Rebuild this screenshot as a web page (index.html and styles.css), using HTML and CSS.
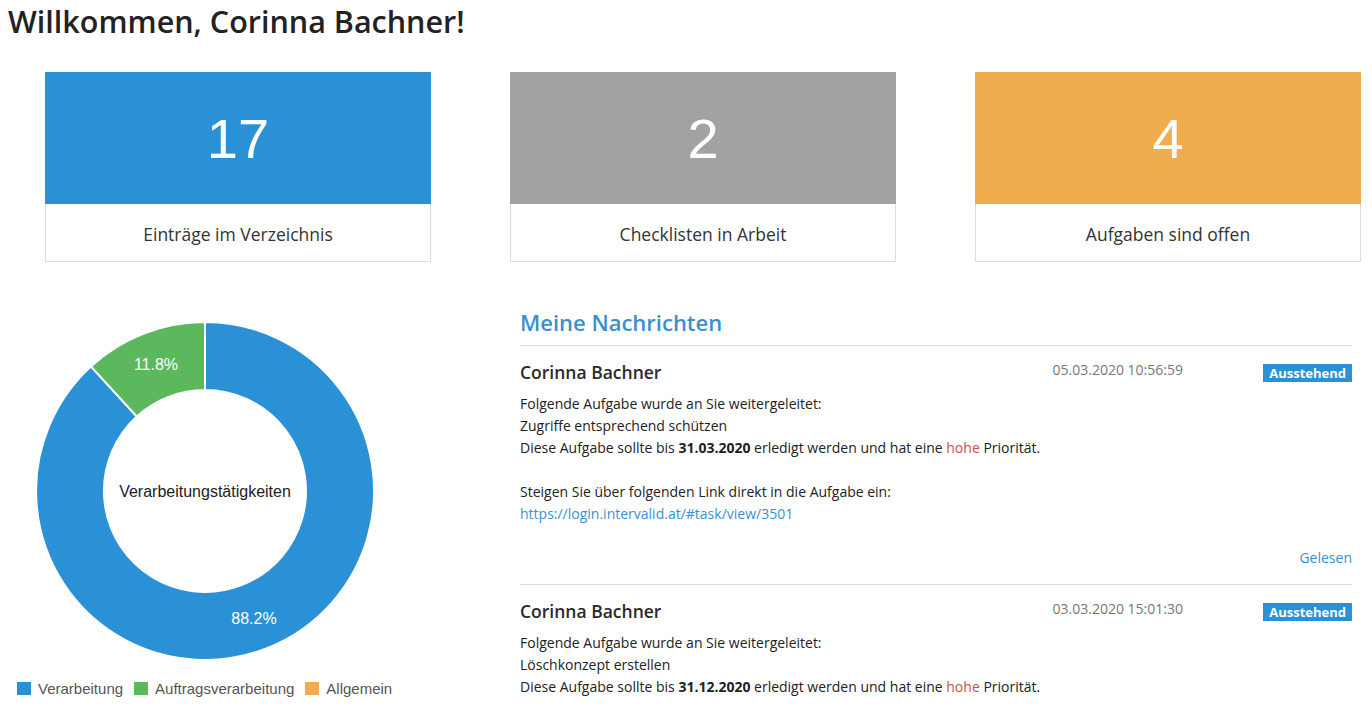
FILE: index.html
```html
<!DOCTYPE html>
<html lang="de">
<head>
  <meta charset="UTF-8">
  <title>Dashboard</title>
  <link rel="stylesheet" href="styles.css">
</head>
<body>
  <h1 class="welcome">Willkommen, Corinna Bachner!</h1>

  <div class="stats">
    <div class="stat">
      <div class="stat-value blue">17</div>
      <div class="stat-label">Einträge im Verzeichnis</div>
    </div>
    <div class="stat">
      <div class="stat-value gray">2</div>
      <div class="stat-label">Checklisten in Arbeit</div>
    </div>
    <div class="stat">
      <div class="stat-value orange">4</div>
      <div class="stat-label">Aufgaben sind offen</div>
    </div>
  </div>

  <div class="lower">
    <div class="chart-col">
      <svg class="donut" width="340" height="340" viewBox="0 0 340 340">
        <path d="M170,1 A169,169 0 1 1 55.9,45.4 L101.8,95.5 A101,101 0 1 0 170,69 Z" fill="#2b91d7" stroke="#fff" stroke-width="2"/>
        <path d="M170,1 A169,169 0 0 0 55.9,45.4 L101.8,95.5 A101,101 0 0 1 170,69 Z" fill="#5cb85c" stroke="#fff" stroke-width="2"/>
        <text x="121" y="49" class="slice-label">11.8%</text>
        <text x="219" y="303" class="slice-label">88.2%</text>
        <text x="170" y="176" class="center-label">Verarbeitungstätigkeiten</text>
      </svg>
      <div class="legend">
        <span class="legend-item"><i class="swatch blue"></i>Verarbeitung</span>
        <span class="legend-item"><i class="swatch green"></i>Auftragsverarbeitung</span>
        <span class="legend-item"><i class="swatch orange"></i>Allgemein</span>
      </div>
    </div>

    <div class="messages">
      <h2 class="messages-title">Meine Nachrichten</h2>

      <div class="message">
        <div class="message-head">
          <span class="sender">Corinna Bachner</span>
          <span class="date">05.03.2020 10:56:59</span>
          <span class="badge-cell"><span class="badge">Ausstehend</span></span>
        </div>
        <p class="message-body">
          Folgende Aufgabe wurde an Sie weitergeleitet:<br>
          Zugriffe entsprechend schützen<br>
          Diese Aufgabe sollte bis <b>31.03.2020</b> erledigt werden und hat eine <span class="prio">hohe</span> Priorität.<br>
          <br>
          Steigen Sie über folgenden Link direkt in die Aufgabe ein:<br>
          <a href="#">https://login.intervalid.at/#task/view/3501</a>
        </p>
        <div class="message-foot"><a href="#">Gelesen</a></div>
      </div>

      <div class="message">
        <div class="message-head">
          <span class="sender">Corinna Bachner</span>
          <span class="date">03.03.2020 15:01:30</span>
          <span class="badge-cell"><span class="badge">Ausstehend</span></span>
        </div>
        <p class="message-body">
          Folgende Aufgabe wurde an Sie weitergeleitet:<br>
          Löschkonzept erstellen<br>
          Diese Aufgabe sollte bis <b>31.12.2020</b> erledigt werden und hat eine <span class="prio">hohe</span> Priorität.
        </p>
      </div>
    </div>
  </div>
</body>
</html>
```

FILE: styles.css
```css
body {
  margin: 0;
  padding: 0 8px;
  font-family: "Open Sans", "Noto Sans", sans-serif;
  color: #333;
  background: #fff;
  overflow: hidden;
}
.welcome {
  margin: 0;
  padding-top: 2px;
  font-size: 30.5px;
  font-weight: 600;
  line-height: 38px;
  color: #222;
}
.stats {
  display: grid;
  grid-template-columns: repeat(3, 386px);
  column-gap: 79px;
  margin: 32px 0 0 37px;
}
.stat {
  border: 1px solid #ddd;
}
.stat-value {
  height: 132px;
  margin: -1px -1px 0;
  display: flex;
  align-items: center;
  justify-content: center;
  font-family: "Liberation Sans", Arial, sans-serif;
  font-size: 56px;
  color: #fff;
}
.blue { background: #2b91d7; }
.gray { background: #a2a2a2; }
.orange { background: #efad4e; }
.green { background: #5cb85c; }
.stat-label {
  height: 57px;
  display: flex;
  align-items: center;
  justify-content: center;
  padding-top: 3px;
  box-sizing: border-box;
  font-size: 17.5px;
  color: #333;
}
.lower {
  display: grid;
  grid-template-columns: 512px 832px;
  margin-top: 45px;
}
.chart-col {
  padding-top: 14px;
}
.donut {
  display: block;
  margin-left: 27px;
}
.slice-label {
  font-family: "Liberation Sans", Arial, sans-serif;
  font-size: 16px;
  fill: #fff;
  text-anchor: middle;
}
.center-label {
  font-family: "Liberation Sans", Arial, sans-serif;
  font-size: 16px;
  fill: #222;
  text-anchor: middle;
}
.legend {
  display: flex;
  gap: 11px;
  margin: 19px 0 0 9px;
  font-family: "Liberation Sans", Arial, sans-serif;
  font-size: 15px;
  color: #555;
}
.legend-item {
  display: flex;
  align-items: center;
}
.swatch {
  width: 14px;
  height: 13px;
  margin-right: 7px;
}
.messages-title {
  margin: 0;
  padding-bottom: 8px;
  font-size: 22px;
  font-weight: 600;
  line-height: 30px;
  color: #3a8fd0;
  border-bottom: 1px solid #ddd;
}
.message {
  border-bottom: 1px solid #ddd;
}
.message:last-child {
  border-bottom: none;
}
.message-head {
  display: grid;
  grid-template-columns: 1fr auto 169px;
  align-items: start;
  padding-top: 13px;
}
.sender {
  font-size: 17.5px;
  font-weight: 600;
  line-height: 26px;
  color: #2a2a2a;
}
.date {
  font-size: 14px;
  line-height: 22px;
  color: #777;
}
.badge-cell {
  text-align: right;
  padding-top: 2px;
}
.badge {
  display: inline-block;
  padding: 1px 6px;
  font-size: 13px;
  font-weight: 700;
  line-height: 16px;
  color: #fff;
  background: #2b91d7;
}
.message-body {
  margin: 8px 0 0;
  font-size: 14px;
  line-height: 22px;
  color: #222;
}
.message-body a,
.message-foot a {
  color: #3a8fd0;
  text-decoration: none;
}
.prio {
  color: #c9504c;
}
.message-foot {
  text-align: right;
  font-size: 14px;
  line-height: 22px;
  padding: 22px 0 15px;
}
```
